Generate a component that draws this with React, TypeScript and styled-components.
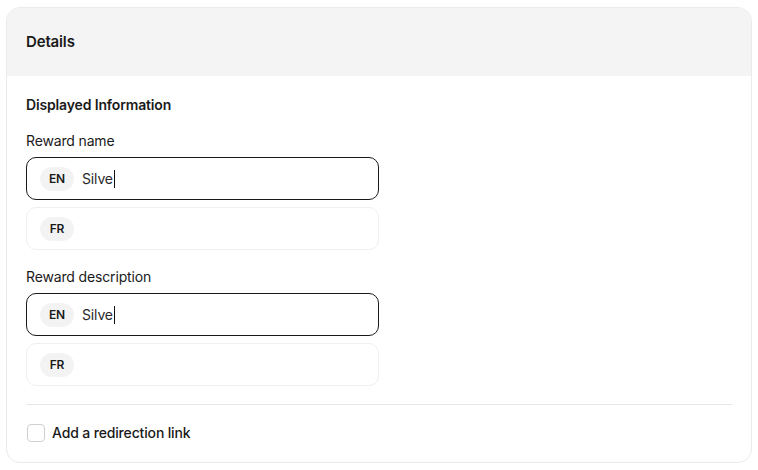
import React from 'react';
import styled, { createGlobalStyle } from 'styled-components';

const GlobalStyle = createGlobalStyle`
  html, body {
    margin: 0;
    background: #ffffff;
    font-family: Inter, "Liberation Sans", Arial, sans-serif;
    color: #1a1a1a;
    letter-spacing: -0.15px;
    -webkit-font-smoothing: antialiased;
  }
`;

const Page = styled.div`
  padding: 7px 6px;
`;

const Card = styled.section`
  width: 746px;
  height: 456px;
  box-sizing: border-box;
  border: 1px solid #ebebeb;
  border-radius: 14px;
  overflow: hidden;
  display: flex;
  flex-direction: column;
`;

const Header = styled.header`
  height: 68px;
  box-sizing: border-box;
  background: #f4f4f4;
  display: flex;
  align-items: center;
  padding: 0 19px 1px;
  font-size: 15px;
  font-weight: 600;
`;

const Body = styled.div`
  padding: 19px 19px 0;
  display: flex;
  flex-direction: column;
`;

const SectionTitle = styled.h3`
  margin: 0 0 16px;
  font-size: 14px;
  line-height: 20px;
  font-weight: 600;
`;

const Field = styled.div`
  display: flex;
  flex-direction: column;
  margin-bottom: 17px;
`;

const Label = styled.label`
  font-size: 14px;
  line-height: 20px;
  font-weight: 400;
  margin-bottom: 6px;
`;

const InputBox = styled.div<{ $focused?: boolean }>`
  width: 353px;
  height: 43px;
  box-sizing: border-box;
  border: 1px solid ${p => (p.$focused ? '#1a1a1a' : '#efefef')};
  border-radius: 10px;
  display: flex;
  align-items: center;
  padding: 0 13px;
  gap: 8px;
  & + & {
    margin-top: 7px;
  }
`;

const Lang = styled.span`
  display: inline-flex;
  align-items: center;
  justify-content: center;
  width: 34px;
  height: 24px;
  border-radius: 12px;
  background: #f3f3f3;
  font-size: 12px;
  font-weight: 600;
  color: #1a1a1a;
`;

const Value = styled.span`
  font-size: 14px;
  color: #2a2a2a;
  display: inline-flex;
  align-items: center;
`;

const Caret = styled.span`
  display: inline-block;
  width: 1px;
  height: 18px;
  background: #111;
  margin-left: 1px;
`;

const Divider = styled.hr`
  border: none;
  border-top: 1px solid #e6e6e6;
  margin: 1px 0 0;
  width: 706px;
`;

const CheckRow = styled.label`
  display: flex;
  align-items: center;
  gap: 7px;
  height: 55px;
  font-size: 14px;
  font-weight: 500;
`;

const Box = styled.span`
  width: 18px;
  height: 18px;
  box-sizing: border-box;
  border: 1px solid #cfcfcf;
  border-radius: 4px;
  margin-left: 1px;
`;

type Entry = { lang: string; value?: string; focused?: boolean };

const LangField = ({ label, entries }: { label: string; entries: Entry[] }) => (
  <Field>
    <Label>{label}</Label>
    {entries.map(e => (
      <InputBox key={e.lang} $focused={e.focused}>
        <Lang>{e.lang}</Lang>
        {e.focused && (
          <Value>
            {e.value}
            <Caret />
          </Value>
        )}
      </InputBox>
    ))}
  </Field>
);

export default function App() {
  return (
    <Page>
      <GlobalStyle />
      <Card>
        <Header>Details</Header>
        <Body>
          <SectionTitle>Displayed Information</SectionTitle>
          <LangField
            label="Reward name"
            entries={[{ lang: 'EN', value: 'Silve', focused: true }, { lang: 'FR' }]}
          />
          <LangField
            label="Reward description"
            entries={[{ lang: 'EN', value: 'Silve', focused: true }, { lang: 'FR' }]}
          />
          <Divider />
          <CheckRow>
            <Box />
            Add a redirection link
          </CheckRow>
        </Body>
      </Card>
    </Page>
  );
}
